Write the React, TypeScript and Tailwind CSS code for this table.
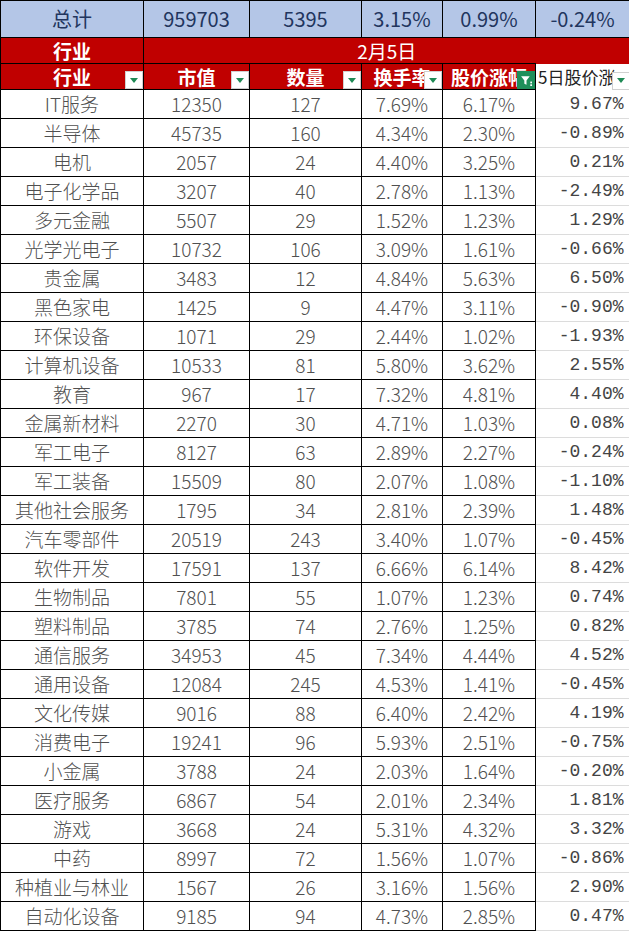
import React from 'react';

type Row = [string, number, number, string, string, string];

const rows: Row[] = [
  ['IT服务', 12350, 127, '7.69%', '6.17%', '9.67%'],
  ['半导体', 45735, 160, '4.34%', '2.30%', '-0.89%'],
  ['电机', 2057, 24, '4.40%', '3.25%', '0.21%'],
  ['电子化学品', 3207, 40, '2.78%', '1.13%', '-2.49%'],
  ['多元金融', 5507, 29, '1.52%', '1.23%', '1.29%'],
  ['光学光电子', 10732, 106, '3.09%', '1.61%', '-0.66%'],
  ['贵金属', 3483, 12, '4.84%', '5.63%', '6.50%'],
  ['黑色家电', 1425, 9, '4.47%', '3.11%', '-0.90%'],
  ['环保设备', 1071, 29, '2.44%', '1.02%', '-1.93%'],
  ['计算机设备', 10533, 81, '5.80%', '3.62%', '2.55%'],
  ['教育', 967, 17, '7.32%', '4.81%', '4.40%'],
  ['金属新材料', 2270, 30, '4.71%', '1.03%', '0.08%'],
  ['军工电子', 8127, 63, '2.89%', '2.27%', '-0.24%'],
  ['军工装备', 15509, 80, '2.07%', '1.08%', '-1.10%'],
  ['其他社会服务', 1795, 34, '2.81%', '2.39%', '1.48%'],
  ['汽车零部件', 20519, 243, '3.40%', '1.07%', '-0.45%'],
  ['软件开发', 17591, 137, '6.66%', '6.14%', '8.42%'],
  ['生物制品', 7801, 55, '1.07%', '1.23%', '0.74%'],
  ['塑料制品', 3785, 74, '2.76%', '1.25%', '0.82%'],
  ['通信服务', 34953, 45, '7.34%', '4.44%', '4.52%'],
  ['通用设备', 12084, 245, '4.53%', '1.41%', '-0.45%'],
  ['文化传媒', 9016, 88, '6.40%', '2.42%', '4.19%'],
  ['消费电子', 19241, 96, '5.93%', '2.51%', '-0.75%'],
  ['小金属', 3788, 24, '2.03%', '1.64%', '-0.20%'],
  ['医疗服务', 6867, 54, '2.01%', '2.34%', '1.81%'],
  ['游戏', 3668, 24, '5.31%', '4.32%', '3.32%'],
  ['中药', 8997, 72, '1.56%', '1.07%', '-0.86%'],
  ['种植业与林业', 1567, 26, '3.16%', '1.56%', '2.90%'],
  ['自动化设备', 9185, 94, '4.73%', '2.85%', '0.47%'],
];

const DropBox = () => (
  <span className="absolute right-0 bottom-0 flex h-[18px] w-[18px] items-center justify-center border border-[#d0d0d0] bg-white">
    <svg width="8" height="5" viewBox="0 0 8 5">
      <path d="M0 0h8L4 5z" fill="#1e8a55" />
    </svg>
  </span>
);

const FilterBox = () => (
  <span className="absolute right-0 bottom-0 flex h-[18px] w-[18px] items-center justify-center bg-[#1f8f5a]">
    <svg width="13" height="13" viewBox="0 0 12 12">
      <path d="M1 2h8L6 6v4L4 9V6z" fill="#fff" />
      <rect x="9.5" y="7" width="1.6" height="1.6" fill="#fff" />
      <rect x="9.5" y="9.5" width="1.6" height="1.6" fill="#fff" />
    </svg>
  </span>
);

const font = { fontFamily: '"Noto Sans CJK SC", "Noto Sans", sans-serif' };

export default function App() {
  const hdr = 'relative h-[26px] border border-black bg-[#c00000] p-0 text-center text-[19px] font-bold leading-[24px] text-white';
  const cell = 'h-[29px] border border-black p-0 text-center text-[19px] font-light leading-[28px] text-[#505050]';
  const top = 'border border-black p-0 text-center font-normal';
  return (
    <div className="h-[932px] w-[629px] overflow-hidden bg-white" style={font}>
      <table className="w-[629px] table-fixed border-collapse">
        <colgroup>
          <col className="w-[143px]" />
          <col className="w-[106px]" />
          <col className="w-[112px]" />
          <col className="w-[81px]" />
          <col className="w-[93px]" />
          <col className="w-[94px]" />
        </colgroup>
        <tbody>
          <tr className="h-[37px] bg-[#b4c6e7] text-[20px] text-[#22355e]">
            <td className={top}>总计</td>
            <td className={top}>959703</td>
            <td className={top}>5395</td>
            <td className={top}>3.15%</td>
            <td className={top}>0.99%</td>
            <td className={top}>-0.24%</td>
          </tr>
          <tr>
            <td className={hdr}>行业</td>
            <td colSpan={5} className="h-[26px] bg-[#c00000] p-0 text-center text-[19px] leading-[24px] text-white">
              2月5日
            </td>
          </tr>
          <tr>
            <td className={hdr}>
              行业
              <DropBox />
            </td>
            <td className={hdr}>
              市值
              <DropBox />
            </td>
            <td className={hdr}>
              数量
              <DropBox />
            </td>
            <td className={`${hdr} overflow-hidden whitespace-nowrap`}>
              换手率
              <DropBox />
            </td>
            <td className={`${hdr} overflow-hidden whitespace-nowrap`}>
              股价涨幅
              <FilterBox />
            </td>
            <td className="relative h-[26px] overflow-hidden whitespace-nowrap border-l border-black bg-white p-0 pl-[2px] text-left text-[17px] leading-[24px] text-[#222]">
              5日股价涨
              <DropBox />
            </td>
          </tr>
          {rows.map((r) => (
            <tr key={r[0]}>
              <td className={cell}>{r[0]}</td>
              <td className={cell}>{r[1]}</td>
              <td className={cell}>{r[2]}</td>
              <td className={cell}>{r[3]}</td>
              <td className={cell}>{r[4]}</td>
              <td
                className="h-[29px] border-b border-l border-b-[#dcdcdc] border-l-black p-0 pr-[6px] text-right text-[18px] leading-[28px] text-[#444]"
                style={{ fontFamily: '"Liberation Mono", monospace' }}
              >
                {r[5]}
              </td>
            </tr>
          ))}
        </tbody>
      </table>
    </div>
  );
}
